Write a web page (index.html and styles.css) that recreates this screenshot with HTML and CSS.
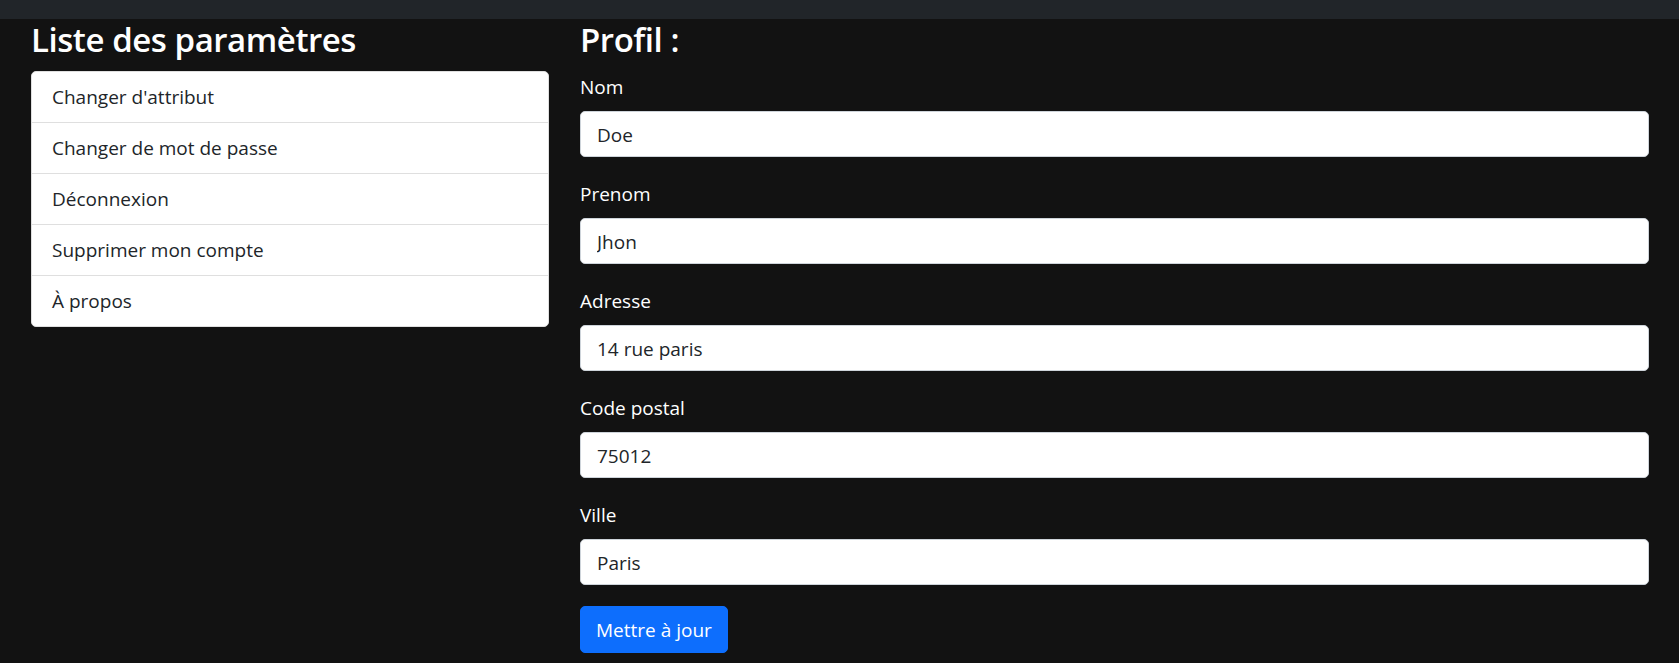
FILE: index.html
```html
<!DOCTYPE html>
<html lang="fr">
<head>
<meta charset="utf-8">
<title>Paramètres</title>
<link rel="stylesheet" href="styles.css">
</head>
<body>
<nav class="topbar"></nav>
<main class="page">
  <section class="sidebar">
    <h3 class="title">Liste des paramètres</h3>
    <ul class="list">
      <li class="list-item">Changer d'attribut</li>
      <li class="list-item">Changer de mot de passe</li>
      <li class="list-item">Déconnexion</li>
      <li class="list-item">Supprimer mon compte</li>
      <li class="list-item">À propos</li>
    </ul>
  </section>
  <section class="profile">
    <h3 class="title">Profil :</h3>
    <form class="form">
      <div class="group">
        <label class="label">Nom</label>
        <input class="input" type="text" value="Doe">
      </div>
      <div class="group">
        <label class="label">Prenom</label>
        <input class="input" type="text" value="Jhon">
      </div>
      <div class="group">
        <label class="label">Adresse</label>
        <input class="input" type="text" value="14 rue paris">
      </div>
      <div class="group">
        <label class="label">Code postal</label>
        <input class="input" type="text" value="75012">
      </div>
      <div class="group">
        <label class="label">Ville</label>
        <input class="input" type="text" value="Paris">
      </div>
      <button class="btn" type="button">Mettre à jour</button>
    </form>
  </section>
</main>
</body>
</html>
```

FILE: styles.css
```css
* { box-sizing: border-box; }

html, body {
  margin: 0;
  padding: 0;
  background: #121212;
  font-family: "Open Sans", "Noto Sans", sans-serif;
  font-size: 20px;
  color: #ffffff;
  overflow: hidden;
}

.topbar {
  height: 19px;
  background: #212529;
}

.page {
  display: flex;
  gap: 31px;
  padding: 0 30px 0 31px;
}

.sidebar {
  width: 518px;
  flex: none;
}

.profile {
  flex: 1;
  min-width: 0;
}

.title {
  margin: 0 0 10px;
  font-size: 33px;
  font-weight: 600;
  line-height: 42px;
  color: #ffffff;
  letter-spacing: -0.45px;
}

.list {
  list-style: none;
  margin: 0;
  padding: 0;
  background: #ffffff;
  border: 1px solid #dfdfdf;
  border-radius: 5px;
}

.list-item {
  padding: 10px 20px;
  line-height: 30px;
  font-size: 19px;
  color: #212529;
}

.list-item + .list-item {
  border-top: 1px solid #dfdfdf;
}

.form {
  display: flex;
  flex-direction: column;
  align-items: flex-start;
}

.group {
  width: 100%;
  margin-bottom: 21px;
  display: flex;
  flex-direction: column;
}

.label {
  display: block;
  margin-bottom: 10px;
  padding-top: 1px;
  height: 30px;
  line-height: 30px;
  font-size: 19px;
  color: #ffffff;
}

.input {
  width: 100%;
  height: 46px;
  padding: 2px 16px 0;
  border: 1px solid #ced4da;
  border-radius: 5px;
  background: #ffffff;
  font-family: inherit;
  font-size: 19px;
  color: #212529;
  outline: none;
}

.btn {
  height: 47px;
  padding: 0 15px;
  border: 1px solid #0d6efd;
  border-radius: 5px;
  background: #0d6efd;
  color: #ffffff;
  font-family: inherit;
  font-size: 19px;
  line-height: 30px;
  cursor: pointer;
}
```
